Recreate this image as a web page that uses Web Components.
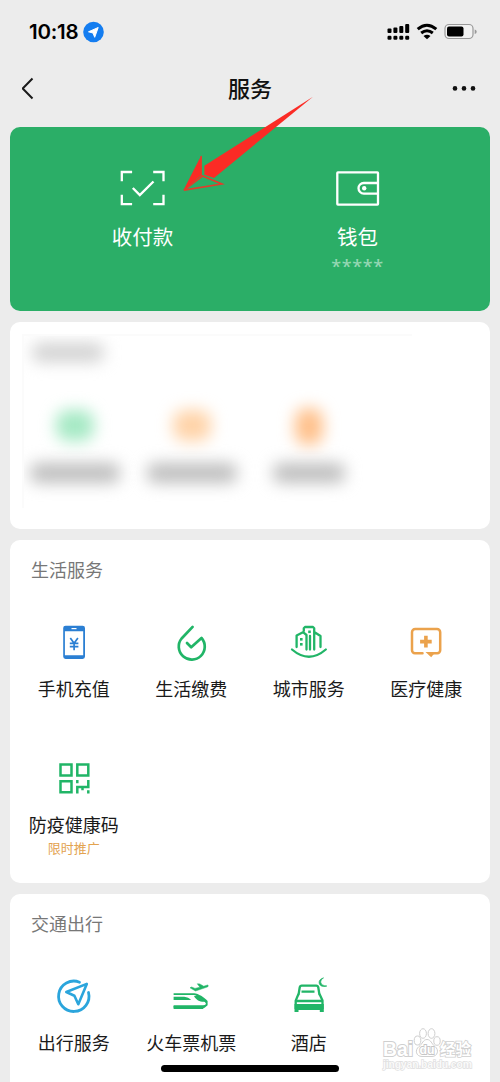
<!DOCTYPE html>
<html lang="zh-CN">
<head>
<meta charset="utf-8">
<title>服务</title>
<style>
html,body{margin:0;padding:0;background:#ececec;font-family:"Noto Sans CJK SC",sans-serif;color:#1a1a1a}
body{width:500px;height:1082px;overflow:hidden}
</style>
</head>
<body>
<services-screen></services-screen>
<script>
const define=(name,html)=>customElements.define(name,class extends HTMLElement{
  constructor(){
    super();
    const t=document.createElement('template');
    t.innerHTML=html;
    this.attachShadow({mode:'open'}).append(t.content.cloneNode(true));
  }
});

/* Each icon is drawn on its own 48x48 grid. */
const ICONS={
phone:`<path fill="#2b7fd3" fill-rule="evenodd" d="M15.600 7.700h17a2.400 2.400 0 0 1 2.400 2.400v28.400a2.400 2.400 0 0 1-2.400 2.400h-17a2.400 2.400 0 0 1-2.400-2.400V10.100a2.400 2.400 0 0 1 2.400-2.400zM14.900 13.300v24h18.300v-24z"/><path d="M21.500 10.600h5" stroke="#fff" stroke-width="1.200"/><path d="M20.300 20l3.800 5.200 3.800-5.200M19.800 25.400h8.600M19.800 28.700h8.600M24.100 25v7.300" fill="none" stroke="#2b7fd3" stroke-width="1.700"/>`,
drop:`<path d="M25.600 8.900L14.600 20.500A13 13 0 1 0 34.500 20L24.200 29.300L20 25" fill="none" stroke="#21b567" stroke-width="2.700" stroke-linejoin="round" stroke-linecap="round"/>`,
city:`<g fill="none" stroke="#21b567" stroke-width="2.300" stroke-linejoin="round" stroke-linecap="round"><path d="M11.600 29V17.500l6.400-3.300 3.500 2.800v14.500M18.800 13V10.200l1.200-1.200h8l1.200 1.200V31.500M30 14.500L35.500 18V29M25 18v13.500M7 31.500q17 14.500 33.800 0"/></g><g fill="#21b567"><rect x="15" y="20" width="2.600" height="2.600"/><rect x="15" y="25" width="2.600" height="2.600"/><rect x="23.200" y="12.500" width="2.600" height="2.600"/></g>`,
medical:`<path d="M20.500 35.200H12.900a2.900 2.900 0 0 1-2.900-2.900V14.200a3.200 3.200 0 0 1 3.200-3.200h21.800a3.200 3.200 0 0 1 3.200 3.200v18.100a2.900 2.900 0 0 1-2.900 2.900h-5" fill="none" stroke="#eba24c" stroke-width="2.500" stroke-linecap="round"/><path d="M23.500 34h10l-4.300 5.200z" fill="#eba24c"/><path d="M23.900 17.800v11.600M18.100 23.600h11.600" stroke="#eba24c" stroke-width="3.600"/>`,
qr:`<g fill="none" stroke="#21b567" stroke-width="2.500"><path d="M10.500 10.600h11v11h-11zM27.300 10.600h11v11h-11zM10.500 27.300h11v11h-11zM27.300 26v3.300M27.300 39.600v-6.700h11v-6.900M38.300 36.200v3.400M32.500 33v3.300"/></g>`,
travel:`<path d="M29.500 10.200A15.200 15.200 0 1 0 38.500 20.500" fill="none" stroke="#2ba5dc" stroke-width="2.800" stroke-linecap="round"/><path d="M36.800 11.900L16.300 20l8.100 3.800 3.900 8.400z" fill="none" stroke="#2ba5dc" stroke-width="2.600" stroke-linejoin="round"/>`,
train:`<g fill="#21b567"><path d="M6.600 21.300h20.500c4.500.4 10 4 13.500 7.700v4.200l-3 2.500H6.600v-1.600h29.500l3-2.200C37 27.700 30 23.200 26.500 23H6.600z"/><path d="M6.600 24.700h10.600c3 .5 5 1.300 7 3.300H6.600zM27 24h5.500l7 5.500c-5 1-10-.5-12.500-5.500zM6.600 33.300h32.300L36 37H6.600z"/><path d="M23 15.800l1.600-.8 3.400 1.400 4.900-1.200-2.600-3.400 2.400.1 4 2.300 4-1.200c1 .5.700 1.600-.6 2.100L28.500 19z" stroke="#21b567" stroke-width=".5"/></g>`,
hotel:`<g fill="none" stroke="#21b567" stroke-width="2.300" stroke-linejoin="round"><path d="M13.500 23l1.200-7.500q.4-1.900 2-1.900h14.600q1.600 0 2 1.900L34.500 23M16.500 19.700h13M13.500 22l-2.800 6.600v8.500M34.500 22l3 6.600v8.500M11.500 29h25.600"/></g><path d="M9.500 32h29.300v8h-4v-2H13.500v2h-4z" fill="#21b567"/><path d="M38.500 5.900c-4 2-4.200 7.800 3.300 8.100-8 2.800-10.800-6.400-3.300-8.100z" fill="#21b567" stroke="#21b567" stroke-width=".7"/>`,
pay:`<g fill="none" stroke="#fff" stroke-width="2.300"><path d="M2.800 17.200V8h10.300M34.200 8h10.300v9.200M2.800 30.700v9.500h10.300M34.200 40.200h10.300v-9.500"/><path d="M13.800 24l7 7L34.500 17.500" stroke-width="2.400"/></g>`,
wallet:`<g fill="none" stroke="#fff" stroke-width="2.300" stroke-linejoin="round"><rect x="3.300" y="8.300" width="40.700" height="32.400" rx=".6"/><path d="M43.800 19H29.800a5.300 5.300 0 0 0 0 10.600H43.800"/></g><circle cx="30.200" cy="24.300" r="2.200" fill="#fff"/>`
};
customElements.define('app-icon',class extends HTMLElement{
  constructor(){super();this.attachShadow({mode:'open'})}
  connectedCallback(){
    this.shadowRoot.innerHTML=`<style>:host{display:block;width:48px;height:48px}svg{display:block}</style><svg width="48" height="48" viewBox="0 0 48 48">${ICONS[this.getAttribute('name')]}</svg>`;
  }
});

define('status-bar',`<style>
:host{display:flex;height:64px;box-sizing:border-box;padding:0 22px 0 29px;align-items:center;justify-content:space-between}
.l,.r{display:flex;align-items:center}
.time{font:600 20.500px/24px Inter,sans-serif;color:#000;letter-spacing:-.25px;width:50px;white-space:nowrap}
svg{display:block}
</style>
<div class="l"><span class="time">10:18</span><svg width="30" height="24" viewBox="79 20 30 24"><circle cx="93.500" cy="32" r="10.300" fill="#147df0"/><path d="M98.200 27.500L88.500 31.800l4.500 1.200 1.700 4.300z" fill="#fff" stroke="#fff" stroke-linejoin="round"/></svg></div>
<div class="r"><svg width="92" height="24" viewBox="386 20 92 24">
<g><rect x="387.500" y="28.600" width="4" height="4.500" rx="1"/><rect x="393.400" y="27.400" width="4" height="5.700" rx="1"/><rect x="399.300" y="25.900" width="4" height="7.200" rx="1"/><rect x="405.200" y="24" width="4" height="9.100" rx="1"/>
<rect x="387.500" y="35.800" width="4" height="4" rx="1.200"/><rect x="393.400" y="35.800" width="4" height="4" rx="1.200"/><rect x="399.300" y="35.800" width="4" height="4" rx="1.200"/><rect x="405.200" y="35.800" width="4" height="4" rx="1.200"/></g>
<path d="M417.700 29.200q9.200-8 18.600 0M421.200 33q5.800-4.600 11.600 0" fill="none" stroke="#000" stroke-width="3"/><path d="M423.500 36q3.500-2.600 7 0l-3.500 3.300z"/>
<rect x="445" y="24.500" width="28" height="14" rx="4" fill="#f2f2f2" stroke="#999" stroke-width="1.200"/><rect x="447" y="26.500" width="16.500" height="10" rx="2"/><path d="M474.700 29.500q2 .5 2 2.200t-2 2.200z" fill="#999"/></svg></div>`);

define('nav-bar',`<style>
:host{display:grid;grid-template-columns:1fr auto 1fr;align-items:center;height:48px;padding:0 22px 2px 22px}
h1{margin:0 0 2px;font-size:22px;line-height:32px;font-weight:500;color:#111}
svg{display:block}.more{justify-self:end}
</style>
<svg width="16" height="24" viewBox="22 76 16 24"><path d="M32.500 78.500L22.700 88.500l9.800 10" fill="none" stroke="#1a1a1a" stroke-width="2" style="overflow:visible"/></svg>
<h1>服务</h1>
<svg class="more" width="28" height="24" viewBox="450 76 28 24"><g fill="#111"><circle cx="455" cy="88.400" r="2.300"/><circle cx="464" cy="88.400" r="2.300"/><circle cx="473" cy="88.400" r="2.300"/></g></svg>`);

define('pay-card',`<style>
:host{display:grid;grid-template-columns:215px 215px;justify-content:center;height:184px;background:#2bae67;border-radius:10px;color:#fff;padding-top:37px;box-sizing:border-box}
</style><slot></slot>`);

define('pay-entry',`<style>
:host{display:flex;flex-direction:column;align-items:center}
.t{font-size:20.500px;line-height:30px;margin-top:9px}
.s{font:500 18px/24px "Noto Sans",sans-serif;letter-spacing:.600px;color:#95d7b3;margin-top:3px;height:24px}
</style><slot name="icon"></slot><span class="t"><slot></slot></span><span class="s"><slot name="sub"></slot></span>`);

define('blurred-card',`<style>
:host{display:block;height:207px;box-sizing:border-box;background:#fff;border-radius:10px;padding:12px 0 0 12px}
.zone{width:390px;height:174px;box-sizing:border-box;border-top:2px solid #fbfbfb;border-left:2px solid #fbfbfb;display:grid;grid-template-columns:repeat(3,117px);grid-template-rows:42px 120px;overflow:hidden}
.head{grid-column:1/4;padding:7px 0 0 8px}
i{display:block;border-radius:8px;filter:blur(8px)}
.head i{width:72px;height:19px;background:#d2d2d2}
.c{display:flex;flex-direction:column;align-items:center;margin-left:-16px;padding-top:32px}
.c i:first-child{width:38px;height:31px;border-radius:12px}
.c i:last-child{width:90px;height:20px;margin-top:22px;background:#bebebe}
</style><div class="zone"><div class="head"><i></i></div>
<div class="c"><i style="background:#a5e9c4"></i><i></i></div>
<div class="c"><i style="background:#ffd3a8"></i><i></i></div>
<div class="c"><i style="background:#ffc08a;width:28px;height:37px;margin:-2px 0 -4px"></i><i style="width:72px"></i></div></div>`);

define('service-card',`<style>
:host{display:block;background:#fff;border-radius:10px;padding:16px 5px 0;box-sizing:border-box}
h2{margin:0 0 36px 16px;font-size:18px;line-height:26px;font-weight:400;color:#777}
.g{display:grid;grid-template-columns:repeat(4,1fr);grid-auto-rows:136px}
</style><h2><slot name="title"></slot></h2><div class="g"><slot></slot></div>`);

define('service-item',`<style>
:host{display:flex;flex-direction:column;align-items:center;white-space:nowrap}
.t{font-size:18px;line-height:26px;margin-top:9px}
.s{font-size:13px;line-height:20px;margin-top:1px;color:#e3a350}
</style><slot name="icon"></slot><span class="t"><slot></slot></span><span class="s"><slot name="note"></slot></span>`);

define('pointer-arrow',`<style>:host{position:absolute;left:180px;top:94px}svg{display:block}</style>
<svg width="136" height="100" viewBox="180 94 136 100"><g fill="#fb2b25"><path d="M183.300 190.500L201.200 155.500V175.600z"/><path d="M204.400 165.800L313 96.700 214 177.900l-9.600-3.200z"/></g><path d="M184 190.200L202.500 176 221.800 184z" fill="none" stroke="#e43c2b" stroke-width="1.700"/><path d="M201.200 156v20" stroke="#e43c2b" stroke-width="1.500"/></svg>`);

define('home-indicator',`<style>:host{position:absolute;left:161px;top:1065px;width:178px;height:7px;border-radius:4px;background:#000}</style>`);

define('site-watermark',`<style>:host{position:absolute;left:380px;top:1024px;width:96px;height:52px}svg{display:block}text{font-family:"Liberation Sans","Noto Sans CJK SC",sans-serif;font-weight:700;paint-order:stroke}</style>
<svg width="96" height="52" viewBox="380 1024 96 52"><g fill="#fff" stroke="#cfcfcf" stroke-width="1">
<text x="383" y="1056" font-size="20" stroke-width="2" textLength="30" lengthAdjust="spacingAndGlyphs">Bai</text>
<ellipse cx="417.500" cy="1040.500" rx="3.300" ry="4.500"/><ellipse cx="423" cy="1033.500" rx="3.400" ry="4.800"/><ellipse cx="431.500" cy="1033.500" rx="3.400" ry="4.800"/><ellipse cx="437" cy="1041" rx="3.200" ry="4.300"/>
<path d="M427 1039.500c4 0 4.500 4.500 8 7 4.500 3.500 2.500 10-3 10h-10c-6 0-7.500-6.500-3-10 3.500-2.500 4-7 8-7z"/></g>
<text x="419.500" y="1053.500" font-size="13" fill="#fff" stroke="#c6c6c6" stroke-width="1.800" textLength="15" lengthAdjust="spacingAndGlyphs">du</text>
<text x="440" y="1055" font-size="15.500" fill="#fff" stroke="#cfcfcf" stroke-width="1.600" textLength="31" style="font-family:'Noto Sans CJK SC',sans-serif">经验</text>
<text x="383" y="1068" font-size="10.500" fill="#fafafa" stroke="#dedede" stroke-width="1.300" textLength="89">jingyan.baidu.com</text></svg>`);

define('services-screen',`<style>
:host{display:block;position:relative;width:500px;height:1082px;overflow:hidden;background:#ececec}
main{display:flex;flex-direction:column;gap:11px;padding:13px 10px 0}
.life{height:343px}.trip{height:200px}
</style>
<status-bar></status-bar><nav-bar></nav-bar>
<main>
<pay-card>
<pay-entry><app-icon slot="icon" name="pay"></app-icon>收付款</pay-entry>
<pay-entry><app-icon slot="icon" name="wallet"></app-icon>钱包<span slot="sub">*****</span></pay-entry>
</pay-card>
<blurred-card></blurred-card>
<service-card class="life"><span slot="title">生活服务</span>
<service-item><app-icon slot="icon" name="phone"></app-icon>手机充值</service-item>
<service-item><app-icon slot="icon" name="drop"></app-icon>生活缴费</service-item>
<service-item><app-icon slot="icon" name="city"></app-icon>城市服务</service-item>
<service-item><app-icon slot="icon" name="medical"></app-icon>医疗健康</service-item>
<service-item><app-icon slot="icon" name="qr"></app-icon>防疫健康码<span slot="note">限时推广</span></service-item>
</service-card>
<service-card class="trip"><span slot="title">交通出行</span>
<service-item><app-icon slot="icon" name="travel"></app-icon>出行服务</service-item>
<service-item><app-icon slot="icon" name="train"></app-icon>火车票机票</service-item>
<service-item><app-icon slot="icon" name="hotel"></app-icon>酒店</service-item>
</service-card>
</main>
<pointer-arrow></pointer-arrow><home-indicator></home-indicator><site-watermark></site-watermark>`);
</script>
</body>
</html>
